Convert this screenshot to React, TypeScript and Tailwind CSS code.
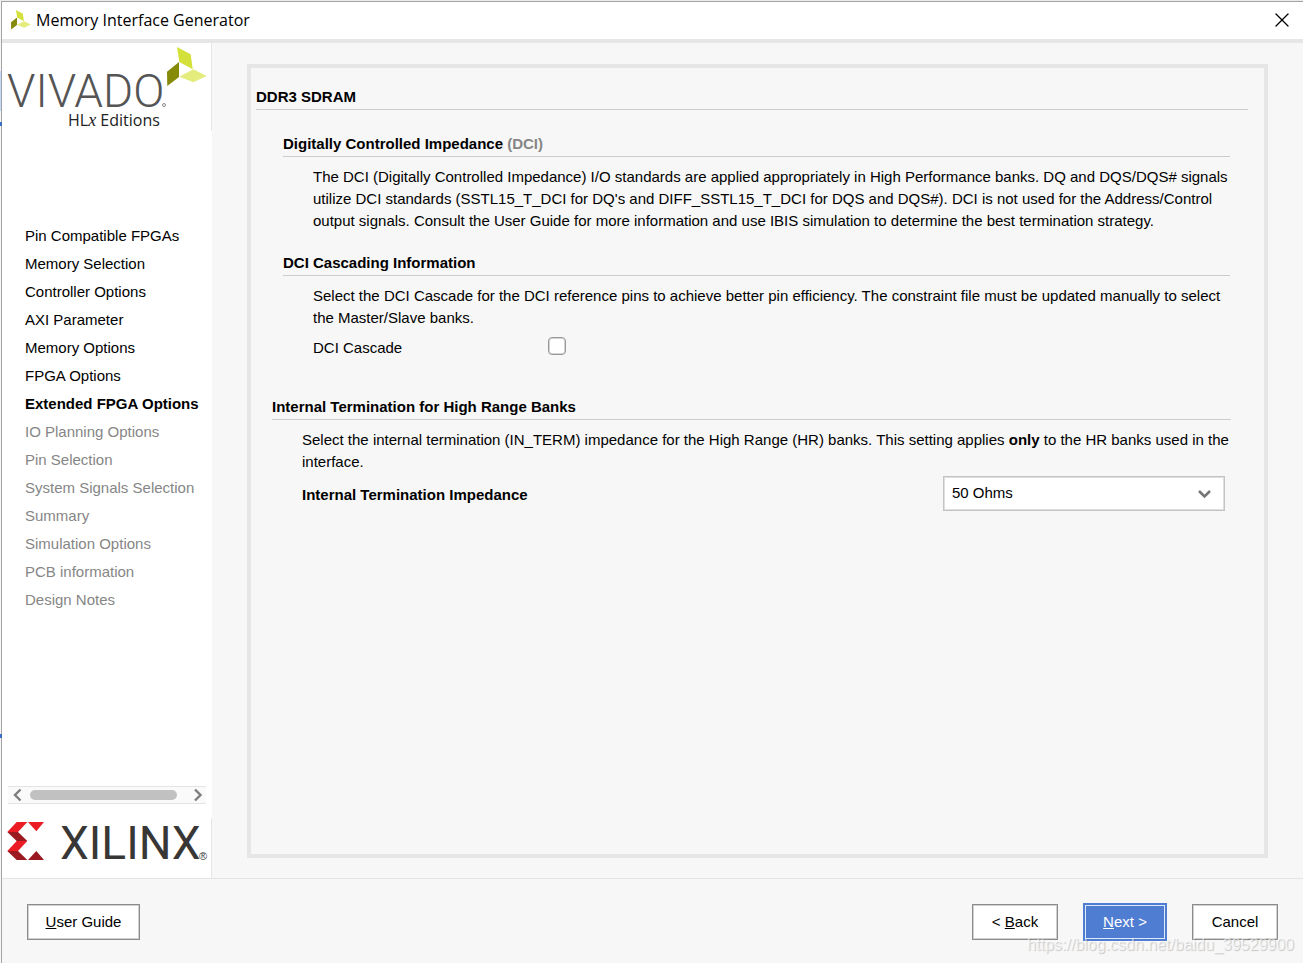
import { X } from 'lucide-react'

type Step = { label: string; state: 'done' | 'current' | 'pending' }

const STEPS: Step[] = [
  { label: 'Pin Compatible FPGAs', state: 'done' },
  { label: 'Memory Selection', state: 'done' },
  { label: 'Controller Options', state: 'done' },
  { label: 'AXI Parameter', state: 'done' },
  { label: 'Memory Options', state: 'done' },
  { label: 'FPGA Options', state: 'done' },
  { label: 'Extended FPGA Options', state: 'current' },
  { label: 'IO Planning Options', state: 'pending' },
  { label: 'Pin Selection', state: 'pending' },
  { label: 'System Signals Selection', state: 'pending' },
  { label: 'Summary', state: 'pending' },
  { label: 'Simulation Options', state: 'pending' },
  { label: 'PCB information', state: 'pending' },
  { label: 'Design Notes', state: 'pending' },
]

const STEP_STYLES = {
  done: 'text-black',
  current: 'text-black font-bold',
  pending: 'text-[#868686]',
}

const BUTTON = 'h-9 border border-[#8c8c8c] bg-white shadow-[inset_0_0_0_1px_#d0d0d0]'
const HEADING = 'border-b border-[#cdcdcd] pb-px font-bold'

// three leaves of the Vivado mark
function Leaves() {
  return (
    <>
      <path d="M175 4 L188.700 11.300 L190.700 26.300 L177.300 19 Z" fill="#d5e13b" />
      <path d="M165 28.700 L177 19 V34 L165.300 43 Z" fill="#858a08" />
      <path d="M177.300 33.700 L191.300 26.300 L204.700 33 L191.300 39.300 Z" fill="#e3ec7c" />
    </>
  )
}

function VivadoLogo() {
  return (
    <svg viewBox="0 0 209 88" className="block w-full" role="img" aria-label="Vivado HLx Editions">
      <text x="5" y="64" fontSize="46" fontWeight="300" fill="#555" fontFamily="Roboto, sans-serif">VIVADO</text>
      <circle cx="162" cy="62" r="1.500" fill="none" stroke="#8a8a8a" />
      <text x="66" y="83" fontSize="16" fill="#222" fontFamily="'Open Sans', sans-serif">
        HL<tspan fontFamily="'Liberation Serif', serif" fontStyle="italic" fontSize="18">x</tspan> Editions
      </text>
      <Leaves />
    </svg>
  )
}

function XilinxLogo() {
  return (
    <svg viewBox="0 0 209 60" className="block w-full" role="img" aria-label="Xilinx">
      <path d="M14.700 4 H25.300 L16 14 H5.300 Z M25.300 23 H14.700 L5.300 33 H16 Z M26 4 H42 L34.300 13.300 Z" fill="#ec1c24" />
      <path d="M5.300 14 H16 L25.300 23 H14.700 Z M5.300 33 H16 L25.300 42 H14.700 Z M26 42 L34.300 33 L42 42 Z" fill="#9b1920" />
      <text x="58" y="41" fontSize="46" fill="#383735" fontFamily="Roboto, sans-serif">XILINX</text>
      <text x="197" y="42" fontSize="11" fill="#383735" fontFamily="'Liberation Sans', sans-serif">®</text>
    </svg>
  )
}

function Sidebar() {
  return (
    <aside className="flex w-[210px] shrink-0 flex-col bg-white">
      <div className="border-r border-[#e6e6e6]">
        <VivadoLogo />
      </div>
      <nav className="mt-[91px]">
        <ol>
          {STEPS.map(step => (
            <li key={step.label} className={`h-7 pl-[23px] leading-7 whitespace-nowrap ${STEP_STYLES[step.state]}`}>
              {step.label}
            </li>
          ))}
        </ol>
      </nav>
      <div className="mt-auto mr-1.5 ml-1.5 flex h-[18px] items-center justify-between border-y border-[#e4e4e4] bg-[#fafafa] pr-[3px] pl-1">
        <button type="button" aria-label="Scroll left">
          <svg width="10" height="14" viewBox="0 0 10 14" fill="none" stroke="#7d7d7d" strokeWidth="2.4">
            <path d="M8.500 1.500 L3 7 L8.500 12.500" />
          </svg>
        </button>
        <div className="mr-4 ml-2 h-2.5 flex-1 rounded-full bg-[#c1c1c1]" />
        <button type="button" aria-label="Scroll right">
          <svg width="10" height="14" viewBox="0 0 10 14" fill="none" stroke="#7d7d7d" strokeWidth="2.4">
            <path d="M2 1.500 L7.500 7 L2 12.500" />
          </svg>
        </button>
      </div>
      <div className="mt-3.5 border-r border-[#e6e6e6]">
        <XilinxLogo />
      </div>
    </aside>
  )
}

function Options() {
  return (
    <main className="flex-1 px-[35px] pt-[21px] pb-5">
      <form id="options" className="h-full border-4 border-[#e6e6e6] pt-[18px] pr-4 pl-[5px] leading-[22px]">
        <h1 className={HEADING}>DDR3 SDRAM</h1>

        <section className="mt-[23px] mr-[18px] ml-[27px]">
          <h2 className={HEADING}>
            Digitally Controlled Impedance <span className="text-[#868686]">(DCI)</span>
          </h2>
          <p className="mt-[9px] pl-[30px]">
            The DCI (Digitally Controlled Impedance) I/O standards are applied appropriately in High Performance banks.
            DQ and DQS/DQS# signals utilize DCI standards (SSTL15_T_DCI for DQ's and DIFF_SSTL15_T_DCI for DQS and
            DQS#). DCI is not used for the Address/Control output signals. Consult the User Guide for more information
            and use IBIS simulation to determine the best termination strategy.
          </p>
        </section>

        <section className="mt-5 mr-[18px] ml-[27px]">
          <h2 className={HEADING}>DCI Cascading Information</h2>
          <p className="mt-[9px] pl-[30px]">
            Select the DCI Cascade for the DCI reference pins to achieve better pin efficiency. The constraint file must
            be updated manually to select the Master/Slave banks.
          </p>
          <div className="mt-2 flex items-start pl-[30px]">
            <label htmlFor="cascade" className="w-[235px]">DCI Cascade</label>
            <input
              id="cascade"
              type="checkbox"
              className="size-[18px] appearance-none rounded-sm border border-[#999] bg-white shadow-[inset_0_0_0_1px_#d4d4d4] checked:bg-[#4f7dd1]"
            />
          </div>
        </section>

        <section className="mt-[37px] mr-[17px] ml-4">
          <h2 className={HEADING}>Internal Termination for High Range Banks</h2>
          <p className="mt-[9px] pl-[30px]">
            Select the internal termination (IN_TERM) impedance for the High Range (HR) banks. This setting applies{' '}
            <b>only</b> to the HR banks used in the interface.
          </p>
          <div className="mt-[3px] mr-1.5 flex items-start justify-between pl-[30px]">
            <label htmlFor="impedance" className="pt-2 font-bold">Internal Termination Impedance</label>
            <div className="relative w-[282px]">
              <select
                id="impedance"
                defaultValue="50"
                className="block h-[35px] w-full appearance-none border border-[#c4c4c4] bg-white pr-8 pb-0.5 pl-2 shadow-[inset_0_0_0_1px_#dedede]"
              >
                <option value="40">40 Ohms</option>
                <option value="50">50 Ohms</option>
                <option value="60">60 Ohms</option>
              </select>
              <svg
                className="pointer-events-none absolute top-3.5 right-3.5"
                width="13"
                height="9"
                viewBox="0 0 13 9"
                fill="none"
                stroke="#767676"
                strokeWidth="2.6"
              >
                <path d="M1 1 L6.500 6.500 L12 1" />
              </svg>
            </div>
          </div>
        </section>
      </form>
    </main>
  )
}

export default function App() {
  return (
    <div className="relative flex min-h-screen flex-col border-t border-[#ececec] bg-[#f7f7f7] pl-px font-['Liberation_Sans',Arial,sans-serif] text-[15px] text-black">
      <div className="flex flex-1 flex-col border-t border-l border-[#a3a3a3]">
        <header className="flex h-[41px] items-center border-b-4 border-[#e6e6e6] bg-white pr-[9px] pb-0.5 pl-[9px]">
          <svg viewBox="165 4 40 40" className="size-5" aria-hidden="true">
            <Leaves />
          </svg>
          <span className="ml-[5px] flex-1 font-['Open_Sans','Noto_Sans',sans-serif] text-base">
            Memory Interface Generator
          </span>
          <button type="button" aria-label="Close">
            <X size={24} strokeWidth={1.3} />
          </button>
        </header>

        <div className="flex flex-1">
          <Sidebar />
          <Options />
        </div>

        <footer className="flex items-center gap-[25px] border-t border-[#e4e4e4] px-[25px] pt-6 pb-[22px]">
          <button type="button" className={`${BUTTON} mr-auto w-[113px]`}>
            <u>U</u>ser Guide
          </button>
          <button type="button" className={`${BUTTON} w-[86px]`}>
            &lt; <u>B</u>ack
          </button>
          <button type="submit" form="options" className="h-[38px] w-[84px] bg-[#4f7dd1] p-0.5 text-white">
            <span className="flex h-full items-center justify-center border border-[#dfe8f8] whitespace-pre">
              <u>N</u>ext &gt;
            </span>
          </button>
          <button type="button" className={`${BUTTON} w-[86px]`}>
            Cancel
          </button>
        </footer>
      </div>

      {/* slivers of the window behind the dialog */}
      <div className="absolute top-[70px] left-0 h-10 w-px bg-[#c4dafa]" />
      <div className="absolute top-[121px] left-0 h-1 w-0.5 bg-[#3b6fc4]" />
      <div className="absolute top-[733px] left-0 h-1 w-0.5 bg-[#3b6fc4]" />

      <span className="pointer-events-none absolute right-[9px] bottom-1.5 text-base text-white/60 [text-shadow:1px_1px_1px_#00000033]">
        https://blog.csdn.net/baidu_39529900
      </span>
    </div>
  )
}
